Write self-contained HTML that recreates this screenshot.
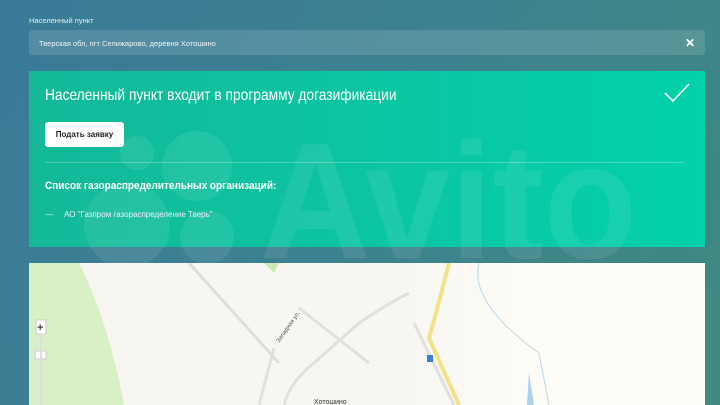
<!DOCTYPE html>
<html><head><meta charset="utf-8"><style>
*{margin:0;padding:0;box-sizing:border-box}
body{width:720px;height:405px;overflow:hidden;position:relative;font-family:"Liberation Sans",sans-serif;
background:linear-gradient(120deg,#3a7a98 0%,#3d8290 50%,#3f8a7f 100%);}
.lbl{position:absolute;left:29px;top:16px;font-size:7.5px;color:#e6f0f3}
.inp{position:absolute;left:29px;top:30px;width:676px;height:25px;background:rgba(255,255,255,0.13);border-radius:3px;font-size:7.5px;color:#eef5f6;padding:9px 10px}
.x{position:absolute;right:10px;top:6px;font-size:12px;color:#fff;font-weight:bold}
.card{position:absolute;left:29px;top:71px;width:676px;height:176px;background:linear-gradient(90deg,#14b998,#02d1aa);}
.h{position:absolute;left:16px;top:16px;font-size:16px;color:#fff;transform:scaleX(0.86);transform-origin:0 0;white-space:nowrap}
.btn{position:absolute;left:16px;top:51px;width:79px;height:25px;background:#fff;border-radius:3px;font-size:8px;color:#222;text-align:center;line-height:25px;font-weight:bold}
.hr{position:absolute;left:16px;right:20px;top:91px;border-top:1px solid rgba(255,255,255,0.25)}
.s{position:absolute;left:16px;top:109px;font-size:11px;color:#fff;font-weight:bold;transform:scaleX(0.91);transform-origin:0 0;white-space:nowrap}
.li{position:absolute;left:16px;top:139px;font-size:8px;color:#eef}
.map{position:absolute;left:29px;top:263px;width:676px;height:142px;background:linear-gradient(90deg,#f7f6f2 55%,#fdfcf7 75%);overflow:hidden}
svg.w{position:absolute;left:0;top:0}
</style></head><body>
<div class="lbl">Населенный пункт</div>
<div class="inp">Тверская обл, пгт Селижарово, деревня Хотошино<span class="x">✕</span></div>
<div class="card">
<div class="h">Населенный пункт входит в программу догазификации</div>
<svg style="position:absolute;right:15px;top:12px" width="26" height="20"><path d="M1 10 L9 18 L25 1" stroke="#fff" stroke-width="1.6" fill="none"/></svg>
<div class="btn">Подать заявку</div>
<div class="hr"></div>
<div class="s">Список газораспределительных организаций:</div>
<div class="li">—&nbsp;&nbsp;&nbsp;&nbsp;&nbsp;АО "Газпром газораспределение Тверь"</div>
</div>
<div class="map">
<svg width="676" height="142">
<path d="M0 0 L50 0 Q80 60 95 142 L0 142Z" fill="#d9f0c4"/>
<path d="M235 0 L250 0 L245 10 Z" fill="#cfe8b8"/>
<path d="M450 0 Q440 40 510 90 L520 142" stroke="#bcd6e6" fill="none"/>
<path d="M500 110 L505 142 L498 142Z" fill="#a8d2ee"/>
<path d="M160 0 L250 100" stroke="#e0ded8" stroke-width="3" fill="none"/>
<path d="M270 45 L340 100 M245 85 L230 142 M285 100 Q260 120 255 142 M385 60 L425 142" stroke="#e2e0da" stroke-width="3" fill="none"/>
<path d="M285 100 L330 60 Q360 40 380 30" stroke="#e2e0da" stroke-width="3" fill="none"/>
<path d="M420 0 Q410 40 400 75 Q420 120 430 142" stroke="#f5e08a" stroke-width="4" fill="none"/>
<text x="250" y="80" font-size="6" fill="#555" transform="rotate(-55 250 80)">Западная ул.</text>
<text x="285" y="141" font-size="7" fill="#333">Хотошино</text>
<rect x="398" y="92" width="6" height="7" fill="#3d7fcf"/>
<rect x="7" y="57" width="10" height="14" fill="#fff" stroke="#ccc"/>
<text x="8" y="68" font-size="11" font-weight="bold" fill="#444">+</text>
<rect x="6" y="88" width="11" height="8" fill="#fff" stroke="#ccc"/>
<rect x="11" y="71" width="2" height="71" fill="#ddd"/>
</svg>
</div>
<svg class="w" width="720" height="405">
<g fill="#fff" fill-opacity="0.08">
<circle cx="137" cy="153" r="17"/><circle cx="197" cy="166" r="35"/>
<circle cx="127" cy="225" r="43"/><circle cx="207" cy="237" r="27"/>
<text x="260" y="258" font-size="165" font-weight="bold" textLength="377" lengthAdjust="spacingAndGlyphs" font-family="Liberation Sans,sans-serif">Avito</text>
</g>
</svg>
</body></html>
